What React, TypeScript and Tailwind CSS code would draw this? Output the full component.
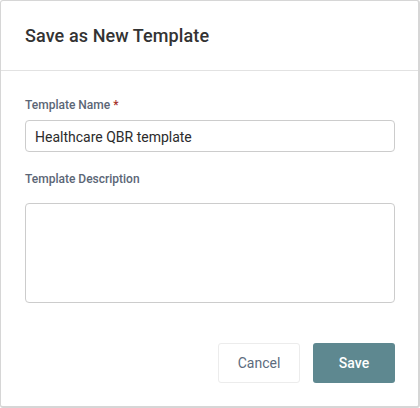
import React from "react";

export default function App() {
  return (
    <div className="w-[420px] h-[408px] bg-white" style={{ fontFamily: "Roboto, 'Liberation Sans', sans-serif" }}>
      <div className="w-[420px] h-[408px] bg-white border border-[#d6d6d6] border-r-2 border-b-2 rounded-[3px] flex flex-col">
        <div className="h-[70px] border-b border-[#e2e2e2] flex items-center pl-[24px] pr-[23px]">
          <h2 className="text-[18px] font-medium text-[#333333] tracking-[0.1px] mt-[-1px]">Save as New Template</h2>
        </div>
        <div className="flex flex-col pl-[24px] pr-[23px] pt-[26px]">
          <label className="text-[12px] font-medium text-[#5b6676] leading-[16px]">
            Template Name <span className="text-[#a5322a]">*</span>
          </label>
          <input
            readOnly
            value="Healthcare QBR template"
            className="mt-[7px] h-[32px] w-full border border-[#cccccc] rounded-[4px] pl-[9px] pr-[8px] pt-[1px] text-[14px] text-[#2b2b2b] outline-none"
          />
          <label className="mt-[19px] text-[12px] font-medium text-[#5b6676] leading-[16px]">Template Description</label>
          <textarea readOnly className="mt-[16px] h-[100px] w-full border border-[#cccccc] rounded-[4px] resize-none outline-none" />
        </div>
        <div className="flex justify-end gap-[13px] pl-[24px] pr-[23px] mt-[40px]">
          <button className="w-[82px] h-[40px] border border-[#ececec] rounded-[3px] bg-white text-[14px] text-[#5d6b7d]">Cancel</button>
          <button className="w-[82px] h-[40px] rounded-[3px] bg-[#5e8890] text-[14px] font-medium text-white">Save</button>
        </div>
      </div>
    </div>
  );
}
